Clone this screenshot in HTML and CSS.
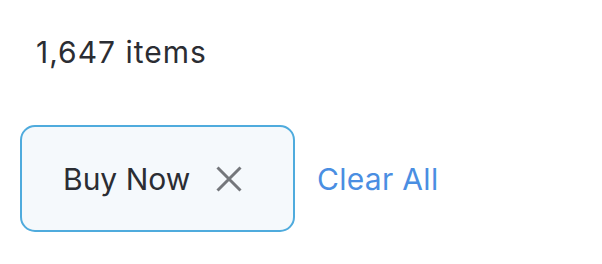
FILE: index.html
```html
<!DOCTYPE html>
<html>
<head>
<meta charset="utf-8">
<link rel="stylesheet" href="styles.css">
</head>
<body>
<div class="page">
  <div class="count">1,647 items</div>
  <div class="filters">
    <div class="chip">
      <span class="chip-label">Buy Now</span>
      <svg class="chip-x" width="28" height="28" viewBox="0 0 28 28" aria-hidden="true">
        <path d="M2.5 2.5 L25.5 25.5 M25.5 2.5 L2.5 25.5" stroke="#74777b" stroke-width="3" fill="none"/>
      </svg>
    </div>
    <a class="clear">Clear All</a>
  </div>
</div>
</body>
</html>
```
FILE: styles.css
```css
html, body {
  margin: 0;
  padding: 0;
  background: #ffffff;
}
.page {
  font-family: Inter, "Open Sans", sans-serif;
  padding: 34px 0 0 20px;
}
.count {
  font-size: 30px;
  color: #2b2d33;
  padding-left: 16px;
  line-height: 36px;
  letter-spacing: 1px;
}
.filters {
  display: flex;
  align-items: center;
  margin-top: 55px;
  gap: 22px;
}
.chip {
  box-sizing: border-box;
  width: 275px;
  height: 107px;
  border: 2px solid #4fabdd;
  border-radius: 15px;
  background: #f5f9fc;
  display: flex;
  align-items: center;
  padding-left: 41px;
  gap: 25px;
}
.chip-label {
  font-size: 30px;
  color: #2b2d33;
}
.chip-x {
  display: block;
}
.clear {
  font-size: 30px;
  color: #4a8ee2;
  letter-spacing: 0.3px;
}
```
